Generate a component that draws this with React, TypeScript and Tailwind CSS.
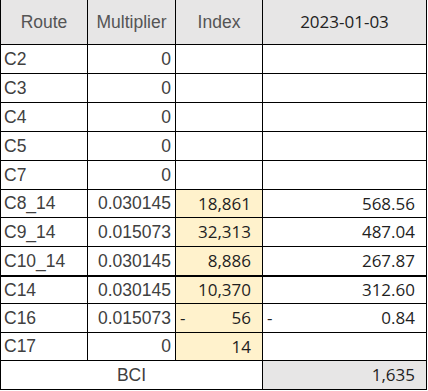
type Row = {
  route: string;
  mult: string;
  index?: string;
  indexDash?: boolean;
  value?: string;
  valueDash?: boolean;
  hl?: boolean;
  h: string;
  thick?: boolean;
};

const rows: Row[] = [
  { route: 'C2', mult: '0', h: 'h-[29px]' },
  { route: 'C3', mult: '0', h: 'h-[29px]' },
  { route: 'C4', mult: '0', h: 'h-[29px]' },
  { route: 'C5', mult: '0', h: 'h-[29px]' },
  { route: 'C7', mult: '0', h: 'h-[29px]' },
  { route: 'C8_14', mult: '0.030145', index: '18,861', value: '568.56', hl: true, h: 'h-[28px]' },
  { route: 'C9_14', mult: '0.015073', index: '32,313', value: '487.04', hl: true, h: 'h-[29px]' },
  { route: 'C10_14', mult: '0.030145', index: '8,886', value: '267.87', hl: true, h: 'h-[30px]', thick: true },
  { route: 'C14', mult: '0.030145', index: '10,370', value: '312.60', hl: true, h: 'h-[27px]' },
  { route: 'C16', mult: '0.015073', index: '56', indexDash: true, value: '0.84', valueDash: true, hl: true, h: 'h-[29px]' },
  { route: 'C17', mult: '0', index: '14', hl: true, h: 'h-[28px]' },
];

const arial = "font-['Liberation_Sans',Arial,sans-serif]";
const sans = "font-['Open_Sans','Noto_Sans',sans-serif]";

export default function App() {
  return (
    <div className="bg-white w-[428px] h-[391px]">
      <div className="w-[427px] border-l border-black">
        {/* header */}
        <div className="grid grid-cols-[87px_88px_87px_164px] h-[45px] border-b border-black bg-[#e7e6e6]">
          <div className={`${arial} flex items-center justify-center border-r border-black text-[17.5px] text-[#555]`}>
            Route
          </div>
          <div className={`${arial} flex items-center justify-center border-r border-black text-[17.5px] text-[#555]`}>
            Multiplier
          </div>
          <div className={`${arial} flex items-center justify-center border-r border-black text-[17.5px] text-[#555]`}>
            Index
          </div>
          <div className={`${sans} flex items-center justify-center border-r border-black text-[17px] text-[#222]`}>
            2023-01-03
          </div>
        </div>

        {rows.map((r) => (
          <div
            key={r.route}
            className={`grid grid-cols-[87px_88px_87px_164px] ${r.h} border-black ${r.thick ? 'border-b-2' : 'border-b'}`}
          >
            <div className={`${arial} flex items-center pl-[3px] border-r border-black text-[17.5px] text-[#404040]`}>
              {r.route}
            </div>
            <div className={`${arial} flex items-center justify-end pr-[4px] border-r border-black text-[17.5px] text-[#404040]`}>
              {r.mult}
            </div>
            <div
              className={`${sans} flex items-center justify-between pl-[4px] pr-[11px] border-r border-black text-[17px] text-[#1f1f1f] ${r.hl ? 'bg-[#fff2cc]' : ''}`}
            >
              <span>{r.indexDash ? '-' : ''}</span>
              <span>{r.index}</span>
            </div>
            <div className={`${sans} flex items-center justify-between pl-[4px] pr-[11px] border-r border-black text-[17px] text-[#1f1f1f]`}>
              <span>{r.valueDash ? '-' : ''}</span>
              <span>{r.value}</span>
            </div>
          </div>
        ))}

        {/* total */}
        <div className="grid grid-cols-[262px_164px] h-[29px] border-b border-black">
          <div className={`${arial} flex items-center justify-center border-r border-black text-[17.5px] text-[#404040]`}>
            BCI
          </div>
          <div className={`${sans} flex items-center justify-end pr-[11px] border-r border-black bg-[#e7e6e6] text-[17px] text-[#1f1f1f]`}>
            1,635
          </div>
        </div>
      </div>
    </div>
  );
}
